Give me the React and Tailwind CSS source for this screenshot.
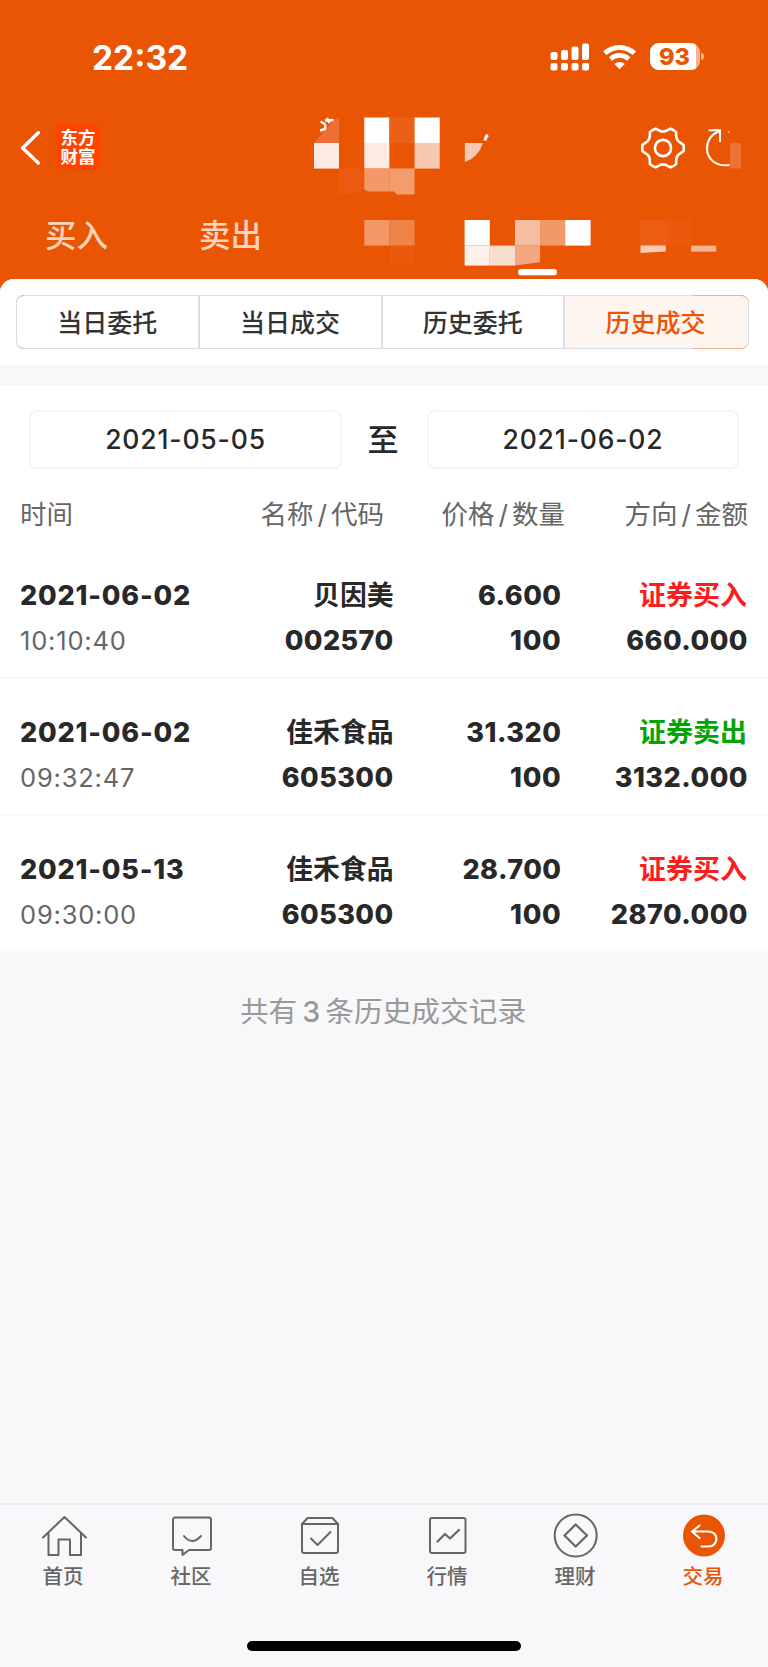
import React from "react";

const records = [
  { date: "2021-06-02", time: "10:10:40", name: "贝因美", code: "002570", price: "6.600", amount: "100", side: "证券买入", total: "660.000" },
  { date: "2021-06-02", time: "09:32:47", name: "佳禾食品", code: "605300", price: "31.320", amount: "100", side: "证券卖出", total: "3132.000" },
  { date: "2021-05-13", time: "09:30:00", name: "佳禾食品", code: "605300", price: "28.700", amount: "100", side: "证券买入", total: "2870.000" },
];

const filters = ["当日委托", "当日成交", "历史委托", "历史成交"];

const columns = [
  ["名称", "代码"],
  ["价格", "数量"],
  ["方向", "金额"],
];

// outline of the settings gear, six lobes
const polar = (r, deg) => {
  const a = (deg * Math.PI) / 180;
  return `${(22 + r * Math.cos(a)).toFixed(2)} ${(22 + r * Math.sin(a)).toFixed(2)}`;
};
const gearPath =
  `M${polar(20.7, -9)}` +
  [0, 60, 120, 180, 240, 300]
    .map((d) => `Q${polar(21.2, d)} ${polar(20.7, d + 9)}L${polar(18.1, d + 17)}Q${polar(15.2, d + 30)} ${polar(18.1, d + 43)}L${polar(20.7, d + 51)}`)
    .join("") +
  "Z";

const StatusBar = () => {
  return (
    <div className="flex h-[115px] items-start pt-[43px] text-white">
      <div className="ml-[92px] w-[458px] text-[33.5px] leading-[30px] font-bold">22:32</div>
      <svg width="40" height="28" viewBox="0 0 40 28" fill="currentColor">
        <rect x="0.5" y="9" width="7" height="8" rx="2" />
        <rect x="11" y="7" width="7" height="10" rx="2" />
        <rect x="21.5" y="3.5" width="7" height="13.5" rx="2" />
        <rect x="32" y="0.5" width="7" height="16.5" rx="2" />
        <rect x="0.5" y="20" width="7" height="7.5" rx="2" />
        <rect x="11" y="20" width="7" height="7.5" rx="2" />
        <rect x="21.5" y="20" width="7" height="7.5" rx="2" />
        <rect x="32" y="20" width="7" height="7.5" rx="2" />
      </svg>
      <svg className="ml-[13px]" width="34" height="28" viewBox="0 0 34 28" fill="none" stroke="currentColor">
        <path d="M1.8 10.3a21.6 21.6 0 0 1 29.6 0" strokeWidth="5" />
        <path d="M7.4 16a13.6 13.6 0 0 1 18.4 0" strokeWidth="4.6" />
        <path d="M16.6 26.3l-5.2-5.2a7.5 7.5 0 0 1 10.4 0z" fill="currentColor" stroke="none" />
      </svg>
      <div className="ml-[13px] flex h-[27px] w-[50px] overflow-hidden rounded-[9px] bg-[#f5b594]">
        <div className="w-[46px] bg-white pl-[3px] text-center text-[23.5px] leading-[28px] font-extrabold text-[#ea5504]">93</div>
      </div>
      <div className="mt-[10px] ml-[1px] h-[7px] w-[3px] rounded-r-full bg-[#f5b594]"></div>
    </div>
  );
};

const TitleBar = () => {
  return (
    <div className="flex h-[66px] items-start">
      <svg className="mt-[15px] ml-[19px] shrink-0" width="24" height="36" viewBox="0 0 24 36" fill="none" stroke="#fff" strokeWidth="3.4" strokeLinecap="round" strokeLinejoin="round">
        <path d="M19.3 2.7L3.6 18l15.7 15" />
      </svg>
      <div className="mt-[9px] ml-[12px] flex h-[46px] w-[46px] shrink-0 flex-col items-center justify-center rounded-[8px] bg-[#ff4400] text-[17.5px] leading-[19.5px] font-bold text-white">
        <span>东方</span>
        <span>财富</span>
      </div>
      {/* masked account name */}
      <svg className="ml-[213px] shrink-0" width="176" height="80" viewBox="314 115 176 80">
        <path d="M339 117.5L334 119.5L314 143H339z" fill="#ed6f33" />
        <path d="M327 118L329.500 123M325 120.500L333.500 120M320.500 121.500L325.500 124.500M325.500 124.500L325 129L320 130.500" stroke="#fff" strokeWidth="2.400" fill="none" strokeLinejoin="round" />
        <rect x="314" y="143" width="25" height="25.6" fill="#fdebe2" />
        <path d="M339 168.6H364.3V188L353 194.4H339z" fill="#eb5a10" />
        <rect x="364.3" y="117.5" width="25.1" height="25.5" fill="#fff" />
        <rect x="364.3" y="143" width="25.1" height="25.6" fill="#fdebe2" />
        <path d="M364.3 168.6H389.5V191.5H371Q366 191 364.3 189z" fill="#f39866" />
        <rect x="389.4" y="117.5" width="25.2" height="25.5" fill="#ec5f17" />
        <path d="M389.4 168.6H414.6V194.4H397L394 191.5H389.4z" fill="#f39c6c" />
        <rect x="414.6" y="117.5" width="25.1" height="25.5" fill="#fff" />
        <rect x="414.6" y="143" width="25.1" height="25.6" fill="#f7c9b3" />
        <path d="M464.8 143H483Q478 158 464.8 162z" fill="#f7c9b3" />
        <path d="M485 140.5q.5-4 3-5.5" stroke="#fff" strokeWidth="3" fill="none" />
      </svg>
      <svg className="mt-[11px] ml-[151px] shrink-0" width="44" height="44" viewBox="0 0 44 44" fill="none" stroke="#fff" strokeWidth="2.6" strokeLinejoin="round">
        <path d={gearPath} />
        <circle cx="22" cy="22" r="8.1" />
      </svg>
      <svg className="mt-[11px] ml-[20px] shrink-0" width="38" height="44" viewBox="705 126 38 44" fill="none" stroke="#fff" strokeWidth="2">
        <path d="M708.5 130.3H720V142" />
        <path d="M719 131.5C711 134 707 141 707 148.5C707 159 716 167 729.5 165" />
        <rect x="730" y="143" width="11" height="25.6" fill="#ee7035" stroke="none" />
        <rect x="728" y="131" width="1.5" height="1.5" fill="#f7c9b3" stroke="none" />
      </svg>
    </div>
  );
};

const TradeTabs = () => {
  return (
    <div className="flex h-[98px] items-start text-[31.5px] leading-[36px] font-medium text-[#fdd3bc]">
      <div className="mt-[37px] ml-[45px] w-[154px]">买入</div>
      <div className="mt-[37px] w-[165px]">卖出</div>
      {/* masked tabs with the active underline */}
      <svg className="mt-[39px] shrink-0" width="354" height="56" viewBox="364 220 354 56">
        <rect x="364.3" y="220" width="25.1" height="25.6" fill="#f39866" />
        <rect x="389.4" y="220" width="25.2" height="25.6" fill="#f08347" />
        <rect x="389.4" y="245.6" width="25.2" height="19.5" fill="#eb590c" />
        <rect x="464.6" y="220" width="25.2" height="25.6" fill="#fff" />
        <rect x="464.6" y="245.6" width="25.2" height="20" fill="#fdf0e9" />
        <rect x="489.8" y="245.6" width="25.2" height="20" fill="#f9ddcd" />
        <rect x="515" y="220" width="25.1" height="25.6" fill="#f6bda0" />
        <path d="M515 245.6H540.1V262.3L515 265.4z" fill="#f4a77f" />
        <rect x="540.1" y="220" width="25.1" height="25.6" fill="#f19a69" />
        <rect x="565.2" y="220" width="25.4" height="25.6" fill="#fff" />
        <rect x="640.5" y="220" width="25.3" height="25.6" fill="#eb5e14" />
        <rect x="665.8" y="220" width="25.2" height="25.6" fill="#ea590c" />
        <path d="M640.5 245.6H665.8V251.6L640.5 253z" fill="#f7cab4" />
        <rect x="691" y="245.6" width="25.2" height="6" fill="#f5b594" />
        <rect x="518" y="269" width="39" height="6.2" rx="3" fill="#fff" />
      </svg>
    </div>
  );
};

const Record = ({ item }) => {
  return (
    <div className="grid h-[137px] grid-cols-[190px_183.5px_168px_186.5px] content-start gap-y-[9px] border-b-2 border-[#f9f9fa] pt-[36px] pl-[20px] text-right text-[27px] leading-[36px] font-extrabold text-[#282828]">
      <div className="text-left tracking-[0.8px] whitespace-nowrap">{item.date}</div>
      <div className="-mt-px text-[26.8px] font-bold">{item.name}</div>
      <div className="tracking-[0.5px]">{item.price}</div>
      <div className={`pr-px font-bold ${item.side === "证券买入" ? "text-[#fb1d20]" : "text-[#04a404]"}`}>{item.side}</div>
      <div className="text-left text-[25.5px] font-normal tracking-[0.8px] text-[#666666]">{item.time}</div>
      <div className="tracking-[0.4px]">{item.code}</div>
      <div className="tracking-[0.7px]">{item.amount}</div>
      <div className="tracking-[0.5px]">{item.total}</div>
    </div>
  );
};

const NavItem = ({ label, active, children }) => {
  return (
    <div className={`flex w-[128px] flex-col items-center text-[20.5px] leading-[28px] font-medium ${active ? "text-[#ea5504]" : "text-[#666666]"}`}>
      <svg width="46" height="46" viewBox="0 0 46 46" fill="none" stroke="currentColor" strokeWidth="2" strokeLinecap="round" strokeLinejoin="round">
        {children}
      </svg>
      <span className="mt-[4px] mr-[2px]">{label}</span>
    </div>
  );
};

const App = () => {
  return (
    <div className="flex h-[1667px] w-[768px] flex-col overflow-hidden bg-[#ea5504] font-['Inter','Noto_Sans_CJK_SC',sans-serif]">
      <StatusBar />
      <TitleBar />
      <TradeTabs />

      <div className="flex flex-1 flex-col rounded-t-[14px] bg-[#f7f8fa]">
        <div className="h-[86px] rounded-t-[14px] bg-white px-[16px] pt-[16px]">
          <div className="relative w-[733px]">
            <div className="grid h-[54px] grid-cols-4 overflow-hidden rounded-[8px] border border-[#dddde5]">
              {filters.map((f, i) => (
                <div
                  key={f}
                  className={`flex items-center justify-center pt-[3px] text-[25px] font-medium ${i === 3 ? "bg-[#fef4f0] pr-[2px] text-[#ea5504]" : "border-r-2 border-[#dddde5] text-[#333333]"}`}
                >
                  {f}
                </div>
              ))}
            </div>
            {/* orange edge showing at the rounded ends */}
            <span className="absolute inset-y-0 left-0 w-[8px] rounded-l-[8px] border-y border-[#f3ae8a]"></span>
            <span className="absolute inset-y-0 right-0 w-[56px] rounded-r-[8px] border-y border-[#f3ae8a]"></span>
          </div>
        </div>

        <div className="mt-[20px] bg-white">
          <div className="flex items-center pt-[25px] pl-[29px] text-[26.5px] font-medium text-[#282828]">
            <div className="flex h-[59px] w-[313px] items-center justify-center rounded-[8px] border-2 border-[#f5f5f5] pt-px tracking-[0.85px]">2021-05-05</div>
            <div className="w-[85px] pt-[2px] pr-[3px] text-center text-[31px]">至</div>
            <div className="flex h-[59px] w-[312px] items-center justify-center rounded-[8px] border-2 border-[#f5f5f5] pt-px tracking-[0.85px]">2021-06-02</div>
          </div>

          <div className="grid h-[73px] grid-cols-[190px_174px_181px_183px] pt-[27px] pl-[20px] text-right text-[26.5px] leading-[36px] text-[#666666]">
            <div className="text-left">时间</div>
            {columns.map(([top, bottom]) => (
              <div key={top}>
                {top}
                <span className="px-[4px]">/</span>
                {bottom}
              </div>
            ))}
          </div>

          {records.map((item, i) => (
            <Record key={i} item={item} />
          ))}
        </div>

        <div className="mt-[39px] pr-[2px] text-center text-[28.7px] leading-[40px] text-[#999999]">
          共有<span className="px-[5px] font-medium">3</span>条历史成交记录
        </div>

        <div className="mt-auto h-[164px] border-t-2 border-[#e9eaef] bg-[#f8f8fb] pt-[8px]">
          <div className="flex">
            <NavItem label="首页">
              <path d="M2 24.5L23.5 4L45 24.5M7.5 20V42H17.5V26.5H29V42H40V20" />
            </NavItem>
            <NavItem label="社区">
              <path d="M6 4.5H40a2 2 0 0 1 2 2V35a2 2 0 0 1-2 2H20L13.5 42V37H6a2 2 0 0 1-2-2V6.500a2 2 0 0 1 2-2z" />
              <path d="M15 23q8 10 17 0" />
            </NavItem>
            <NavItem label="自选">
              <path d="M5 11L10.500 5H35.500L41 11V38a2 2 0 0 1-2 2H7a2 2 0 0 1-2-2zM5 11H41" />
              <path d="M14 25.500L20.500 32L33.500 19" />
            </NavItem>
            <NavItem label="行情">
              <rect x="5" y="5" width="35.500" height="35" rx="2" />
              <path d="M12.500 28.500L20 21L25 25.500L34 17" strokeWidth="2.200" />
            </NavItem>
            <NavItem label="理财">
              <circle cx="22.700" cy="22.500" r="21" />
              <path d="M22.700 11.500L34 22.500L22.700 33.500L11.500 22.500z" strokeWidth="2.200" />
            </NavItem>
            <NavItem label="交易" active>
              <circle cx="23" cy="22.500" r="21" fill="currentColor" stroke="none" />
              <path d="M18.500 12.500L11 18.500L18.500 25M11 18.500H27.500C38 18.500 38 33.500 27.500 33.500H20.500" stroke="#fff" strokeWidth="2.200" />
            </NavItem>
          </div>
          <div className="mx-auto mt-[50px] h-[10px] w-[274px] rounded-full bg-black"></div>
        </div>
      </div>
    </div>
  );
};

export default App;
